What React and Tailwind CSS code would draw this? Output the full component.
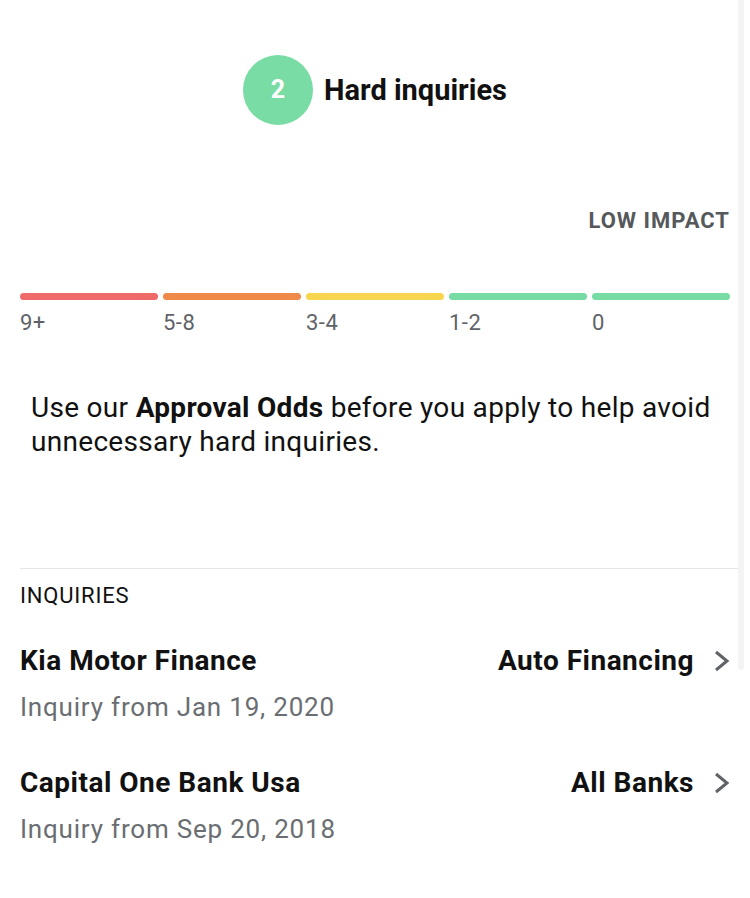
function Chevron() {
  return (
    <svg width="17" height="22" viewBox="0 0 17 22" fill="none">
      <path d="M3 2 L14 11 L3 20" stroke="#5f6368" strokeWidth="3" />
    </svg>
  );
}

const inquiries = [
  { name: "Kia Motor Finance", type: "Auto Financing", date: "Jan 19, 2020" },
  { name: "Capital One Bank Usa", type: "All Banks", date: "Sep 20, 2018" },
];

const scale = [
  { label: "9+", color: "bg-[#ee6b6a]" },
  { label: "5-8", color: "bg-[#f08a4b]" },
  { label: "3-4", color: "bg-[#f7d54f]" },
  { label: "1-2", color: "bg-[#77dca4]" },
  { label: "0", color: "bg-[#77dca4]" },
];

export default function App() {
  return (
    <div
      className="relative w-[750px] h-[898px] bg-white overflow-hidden text-[#111111]"
      style={{ fontFamily: "Roboto, 'Liberation Sans', sans-serif" }}
    >
      {/* scroll track */}
      <div className="absolute top-0 right-[6px] w-[6px] h-[670px] rounded-b bg-[#f4f4f4]" />

      <div className="px-5 pt-[55px]">
        <div className="flex items-center justify-center gap-[11px]">
          <div className="w-[70px] h-[70px] rounded-full bg-[#78dca4] flex items-center justify-center text-white font-bold text-[25px]">
            2
          </div>
          <h1 className="font-bold text-[29px] leading-none">Hard inquiries</h1>
        </div>

        <div className="mt-[85px] text-right text-[22px] leading-none font-bold tracking-[1px] text-[#55595c]">
          LOW IMPACT
        </div>

        <div className="mt-[61px] grid grid-cols-5 gap-[5px]">
          {scale.map((s) => (
            <div key={s.label}>
              <div className={`h-[7px] rounded-full ${s.color}`} />
              <div className="mt-[12px] text-[22px] leading-none tracking-[0.5px] text-[#5f6368]">{s.label}</div>
            </div>
          ))}
        </div>

        <p className="mt-[57px] pl-[11px] text-[28px] leading-[34px] tracking-[0.3px]">
          Use our <span className="font-bold">Approval Odds</span> before you apply to help avoid
          unnecessary hard inquiries.
        </p>
      </div>

      <div className="ml-5 mr-[12px] mt-[109px] h-px bg-[#e3e5e7]" />

      <div className="px-5">
        <div className="mt-[16px] text-[22px] leading-none tracking-[0.8px]">INQUIRIES</div>

        <div className="mt-[40px] flex flex-col gap-[49px]">
          {inquiries.map((q) => (
            <div key={q.name}>
              <div className="flex items-center justify-between">
                <div className="font-bold text-[28px] leading-none tracking-[0.5px]">{q.name}</div>
                <div className="flex items-center gap-[19px]">
                  <div className="font-bold text-[28px] leading-none tracking-[0.5px]">{q.type}</div>
                  <Chevron />
                </div>
              </div>
              <div className="mt-[19px] text-[26px] leading-none tracking-[0.8px] text-[#6a6e72]">
                Inquiry from {q.date}
              </div>
            </div>
          ))}
        </div>
      </div>
    </div>
  );
}
